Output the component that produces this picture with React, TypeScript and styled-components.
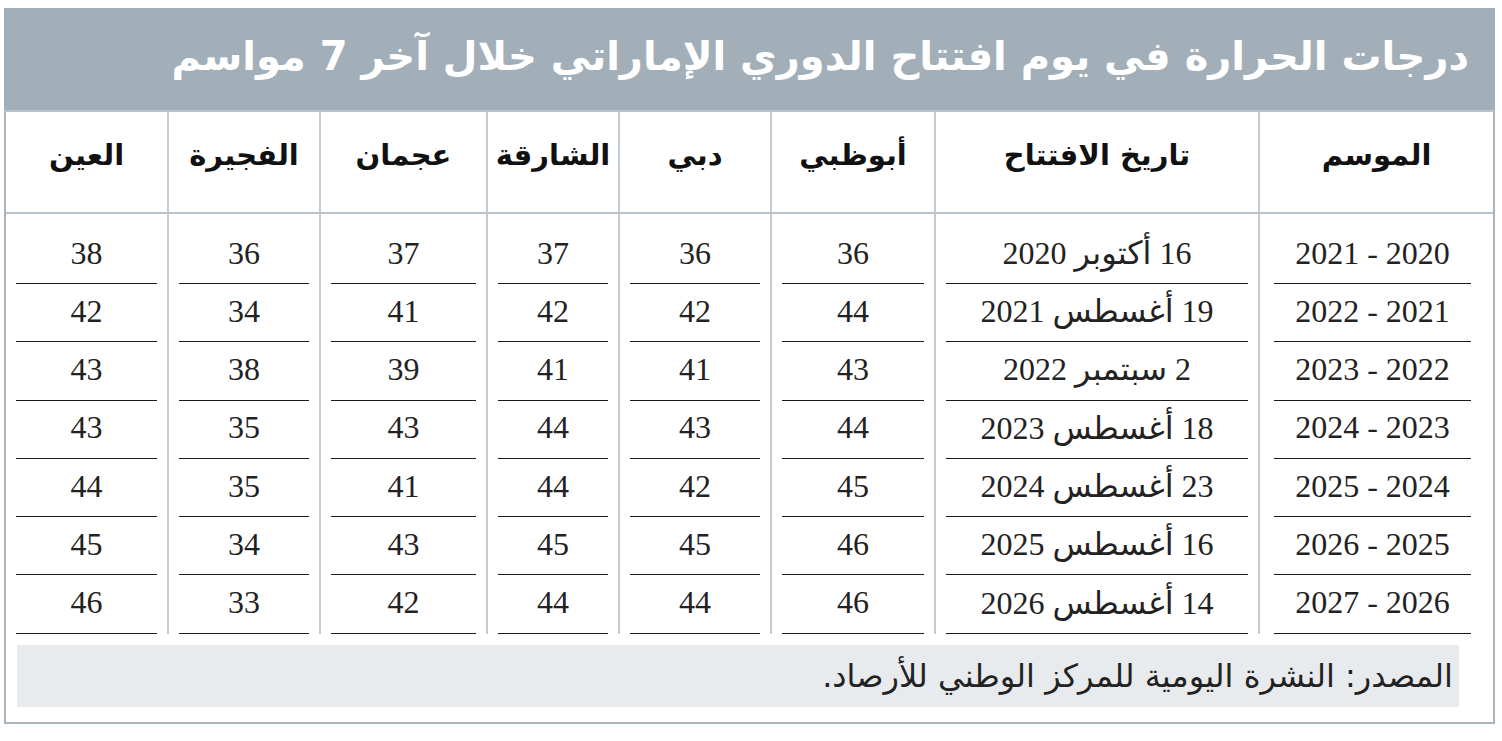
import React from "react";
import styled, { createGlobalStyle } from "styled-components";

const GlobalStyle = createGlobalStyle`
  body {
    margin: 0;
    background: #ffffff;
    font-family: "DejaVu Sans", sans-serif;
  }
`;

const columns = [
  "الموسم",
  "تاريخ الافتتاح",
  "أبوظبي",
  "دبي",
  "الشارقة",
  "عجمان",
  "الفجيرة",
  "العين",
];

// column widths, right to left
const widths = [235, 324, 164, 152, 132, 167, 152, 161];

const rows = [
  ["2020 - 2021", "16 أكتوبر 2020", "36", "36", "37", "37", "36", "38"],
  ["2021 - 2022", "19 أغسطس 2021", "44", "42", "42", "41", "34", "42"],
  ["2022 - 2023", "2 سبتمبر 2022", "43", "41", "41", "39", "38", "43"],
  ["2023 - 2024", "18 أغسطس 2023", "44", "43", "44", "43", "35", "43"],
  ["2024 - 2025", "23 أغسطس 2024", "45", "42", "44", "41", "35", "44"],
  ["2025 - 2026", "16 أغسطس 2025", "46", "45", "45", "43", "34", "45"],
  ["2026 - 2027", "14 أغسطس 2026", "46", "44", "44", "42", "33", "46"],
];

const Frame = styled.div`
  box-sizing: border-box;
  width: 1491px;
  margin: 8px 0 0 4px;
  border: 2px solid #a9b5be;
  border-top: none;
  direction: rtl;
`;

const TitleBar = styled.div`
  box-sizing: border-box;
  height: 104px;
  display: flex;
  align-items: center;
  padding: 0 26px 6px 0;
  background: #a2afb9;
  border-bottom: 2px solid #b9c3cb;
  margin: 0 -2px;
`;

const Title = styled.h1`
  margin: 0;
  color: #ffffff;
  font-size: 40px;
  font-weight: 700;
  white-space: nowrap;
`;

const Table = styled.div`
  display: grid;
  grid-template-columns: ${widths.map((w) => `${w}px`).join(" ")};
`;

const HeadCell = styled.div<{ $last?: boolean }>`
  box-sizing: border-box;
  height: 102px;
  display: flex;
  align-items: center;
  justify-content: center;
  padding-bottom: 14px;
  border-bottom: 2px solid #b9c3cb;
  border-left: ${(p) => (p.$last ? "none" : "2px solid #c3ccd3")};
  color: #111111;
  font-size: 29px;
  font-weight: 700;
  white-space: nowrap;
`;

const Cell = styled.div<{ $last?: boolean; $first?: boolean; $edge?: boolean }>`
  box-sizing: border-box;
  height: ${(p) => (p.$first ? "70px" : "58.3px")};
  padding: ${(p) => (p.$first ? "12px" : "0")} ${(p) => (p.$edge ? "22px" : "10px")} 0
    ${(p) => (p.$edge ? "14px" : "10px")};
  border-left: ${(p) => (p.$last ? "none" : "2px solid #c3ccd3")};
`;

const Value = styled.div`
  box-sizing: border-box;
  height: 100%;
  display: flex;
  align-items: center;
  justify-content: center;
  padding-bottom: 3px;
  border-bottom: 1.5px solid #1c1c1c;
  color: #222222;
  font-family: "Liberation Serif", "DejaVu Sans", serif;
  font-size: 32px;
  white-space: nowrap;
`;

const Source = styled.div`
  box-sizing: border-box;
  height: 62px;
  margin: 11px 34px 15px 11px;
  padding: 0 6px 0 0;
  display: flex;
  align-items: center;
  background: #e8ebee;
  color: #222222;
  font-size: 32px;
`;

export default function App() {
  return (
    <>
      <GlobalStyle />
      <Frame>
        <TitleBar>
          <Title>درجات الحرارة في يوم افتتاح الدوري الإماراتي خلال آخر 7 مواسم</Title>
        </TitleBar>
        <Table>
          {columns.map((c, i) => (
            <HeadCell key={c} $last={i === columns.length - 1}>
              {c}
            </HeadCell>
          ))}
          {rows.map((row, r) =>
            row.map((v, i) => (
              <Cell
                key={`${r}-${i}`}
                $first={r === 0}
                $edge={i === 0}
                $last={i === row.length - 1}
              >
                <Value>{v}</Value>
              </Cell>
            ))
          )}
        </Table>
        <Source>المصدر: النشرة اليومية للمركز الوطني للأرصاد.</Source>
      </Frame>
    </>
  );
}
